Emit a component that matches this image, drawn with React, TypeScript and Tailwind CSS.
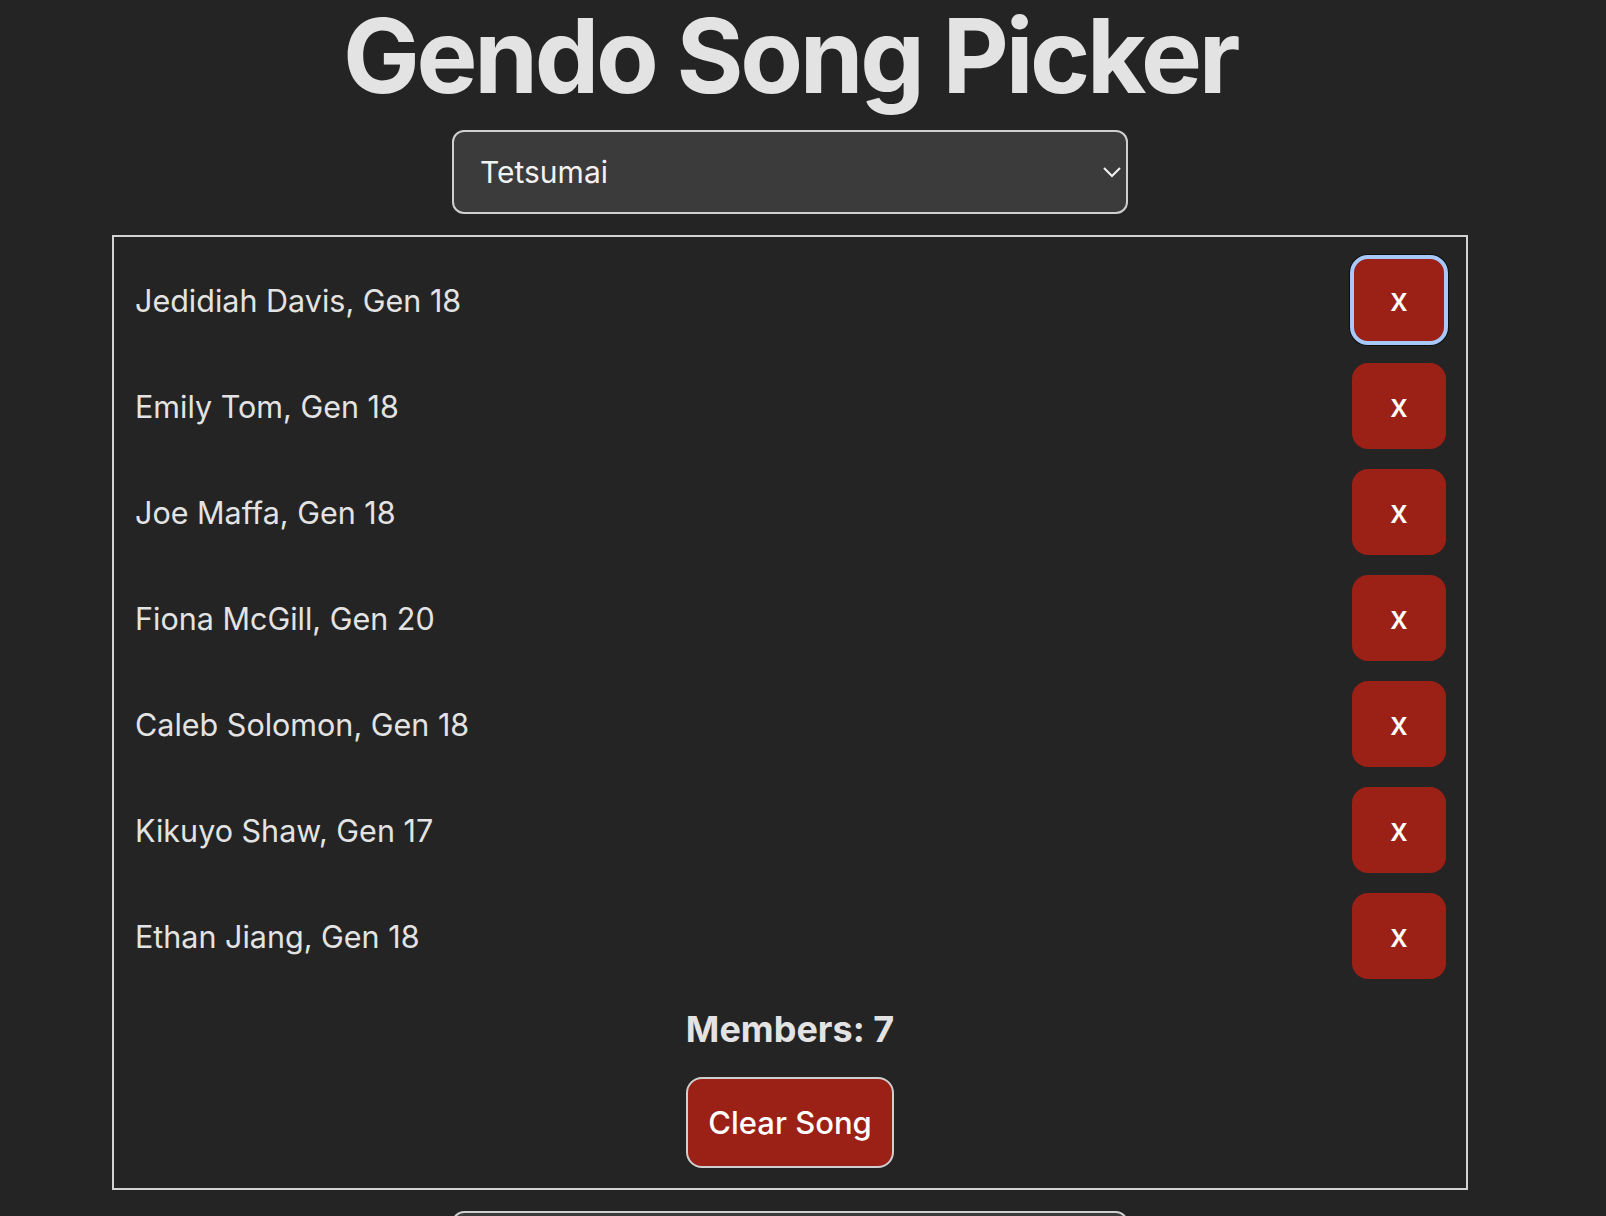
import { useState } from "react";

type Member = {
  name: string;
  gen: number;
};

const initialMembers: Member[] = [
  { name: "Jedidiah Davis", gen: 18 },
  { name: "Emily Tom", gen: 18 },
  { name: "Joe Maffa", gen: 18 },
  { name: "Fiona McGill", gen: 20 },
  { name: "Caleb Solomon", gen: 18 },
  { name: "Kikuyo Shaw", gen: 17 },
  { name: "Ethan Jiang", gen: 18 },
];

function SongSelect({ value }: { value: string }) {
  return (
    <div className="mx-auto flex h-[84px] w-[676px] items-center justify-between rounded-xl border-2 border-[#cfcfcf] bg-[#3b3b3b] pl-[26px] pr-[3px] text-[30px] leading-[40px] text-[#f2f2f2]">
      <span>{value}</span>
      <svg width="20" height="12" viewBox="0 0 20 12" fill="none" className="mr-[1px]">
        <polyline points="2,2 10,10 18,2" stroke="#f2f2f2" strokeWidth="2" />
      </svg>
    </div>
  );
}

export default function App() {
  const [members, setMembers] = useState(initialMembers);

  return (
    <div className="min-h-[1216px] w-full bg-[#242424] font-['Inter','Liberation_Sans',sans-serif] text-[#e3e3e3]">
      <div className="w-[1580px]">
        <h1 className="text-center text-[102.4px] font-bold leading-[112.64px] tracking-[-0.032em]">
          Gendo Song Picker
        </h1>

        <div className="mt-[17px]">
          <SongSelect value="Tetsumai" />
        </div>

        <div className="mx-auto mt-[21px] flex w-[1356px] flex-col items-center border-2 border-[#d2d2d2] p-5">
          <ul className="flex w-full flex-col gap-5">
            {members.map((m, i) => (
              <li key={m.name} className="flex items-center justify-between">
                <span className="pl-px pt-[3px] text-[30.5px] leading-[44px]">
                  {m.name}, Gen {m.gen}
                </span>
                <button
                  onClick={() => setMembers(members.filter((x) => x.name !== m.name))}
                  className={
                    i === 0
                      ? "h-[86px] w-[94px] rounded-2xl bg-[#9b2015] text-[32px] font-medium leading-[48px] text-white shadow-[0_0_0_3px_#0e0e0e] outline-4 -outline-offset-2 outline-[#a6c8fb]"
                      : "h-[86px] w-[94px] rounded-2xl bg-[#9b2015] text-[32px] font-medium leading-[48px] text-white"
                  }
                >
                  x
                </button>
              </li>
            ))}
          </ul>

          <h3 className="mt-[28px] text-[36px] font-bold leading-[44px]">
            Members: {members.length}
          </h3>

          <button
            onClick={() => setMembers([])}
            className="mt-[26px] rounded-2xl border-2 border-[#cfcfcf] bg-[#9b2015] px-5 py-5 text-[31px] font-medium leading-[47px] text-white"
          >
            Clear Song
          </button>
        </div>

        <div className="mt-[21px] pb-6">
          <SongSelect value="" />
        </div>
      </div>
    </div>
  );
}
